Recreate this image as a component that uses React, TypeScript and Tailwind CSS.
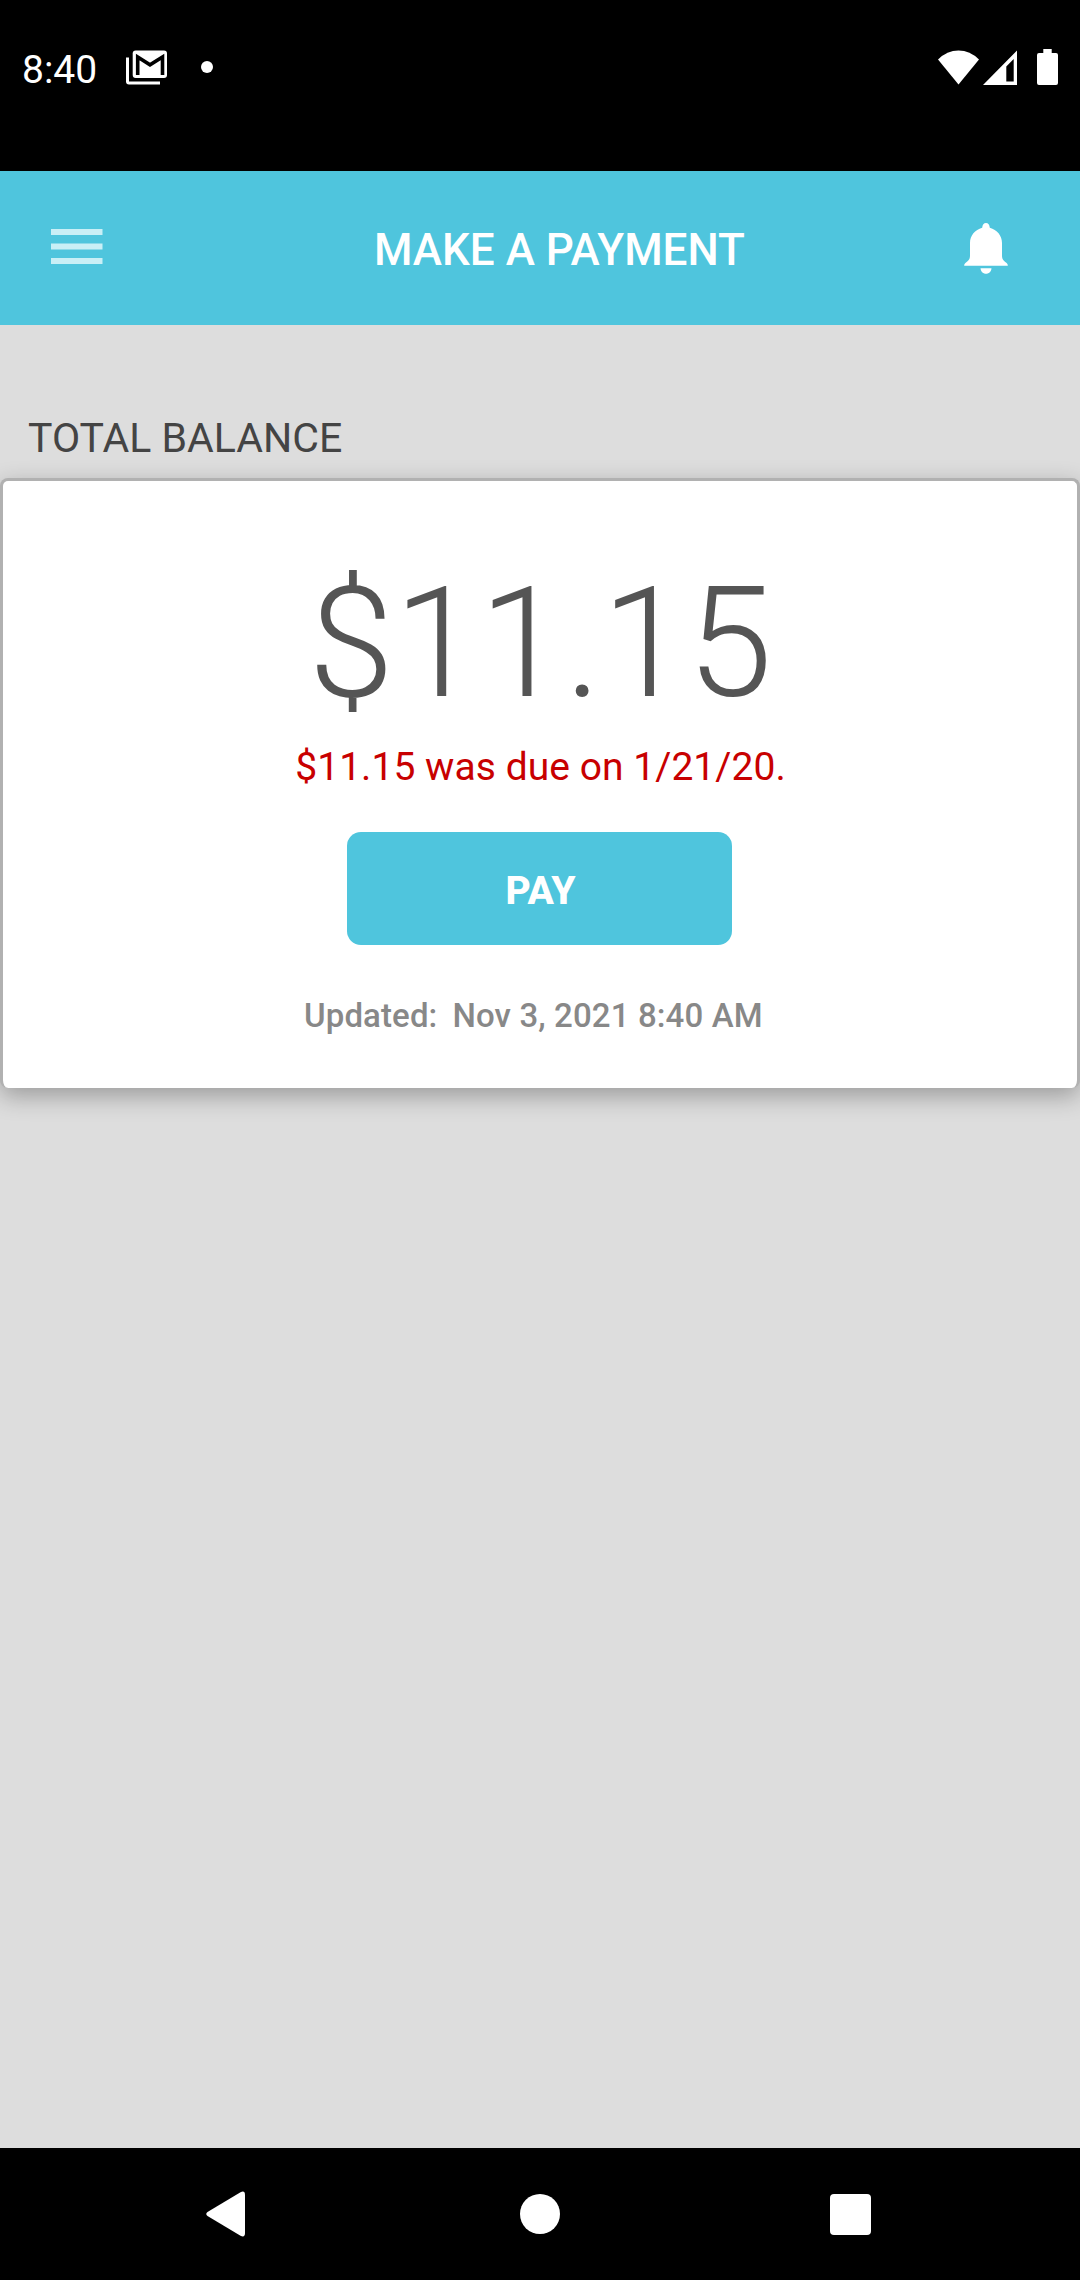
import React from 'react';

const account = {
  balance: '$11.15',
  dueNotice: '$11.15 was due on 1/21/20.',
  updated: 'Nov 3, 2021 8:40 AM',
};

const StatusBar: React.FC = () => (
  <div className="flex h-[171px] shrink-0 items-start justify-between bg-black pl-[22px] pr-[22px] pt-[49px] text-white">
    <div className="flex h-9 items-center">
      <span className="w-[104px] text-[39px] leading-9 pt-[5px]">8:40</span>
      <svg width="41" height="35" viewBox="0 0 41 35" fill="none">
        <path d="M0 7.500h3v24h31v3H3q-3 0-3-3z" fill="white" />
        <rect x="6.700" y="0.500" width="34.300" height="27.500" rx="3" fill="white" />
        <path d="M11.700 25V7L24 14.800 36.500 7V25" stroke="black" strokeWidth="3.600" />
      </svg>
      <span className="ml-[34px] size-3 rounded-full bg-white" />
    </div>
    <div className="flex h-9 items-start">
      <svg width="41" height="36" viewBox="0 0 41 36" fill="white">
        <path d="M20.500 35.500L0 10.500Q9 1.500 20.500 1.500T41 10.500z" />
      </svg>
      <svg className="ml-1" width="34" height="36" viewBox="0 0 34 36" fill="white">
        <path fillRule="evenodd" d="M34 1.500V36H0zM30.700 10L23.300 17.500V32.500H30.700z" />
      </svg>
      <svg className="ml-5" width="21" height="36" viewBox="0 0 21 36" fill="white">
        <path d="M6.300 0h8.400v4H19q2 0 2 2v28q0 2-2 2H2q-2 0-2-2V6q0-2 2-2h4.300z" />
      </svg>
    </div>
  </div>
);

const Header: React.FC = () => (
  <header className="flex h-[154px] shrink-0 items-center bg-[#4fc5dd] text-white">
    <svg className="ml-[51px] mb-[3px]" width="52" height="36" viewBox="0 0 52 36" fill="#c9eff6">
      <rect y="0" width="51.500" height="6" />
      <rect y="14.500" width="51.500" height="6" />
      <rect y="29" width="51.500" height="6" />
    </svg>
    <h1 className="ml-[271px] w-[590px] pt-[3px] text-[44px] font-medium leading-[52px] whitespace-nowrap">MAKE A PAYMENT</h1>
    <svg width="44" height="51" viewBox="0 0 44 51" fill="white">
      <path d="M22 0c2.200 0 3.600 1.600 3.800 4.700C33 6.800 38 12.500 38 20v12.500c0 4 1.500 5 4.300 7.300 1.200 1 1.500 1.700 1.500 3H.2c0-1.300.3-2 1.500-3C4.500 37.500 6 36.500 6 32.500V20C6 12.500 11 6.800 18.200 4.700 18.400 1.600 19.800 0 22 0z" />
      <path d="M16.500 45.300h11c-.3 3.300-2.500 5.500-5.500 5.500s-5.200-2.200-5.500-5.500z" />
    </svg>
  </header>
);

const BalanceCard: React.FC = () => (
  <section className="flex h-[610px] flex-col items-center rounded-[8px] border-[3px] border-b-0 border-[#b1b1b1] bg-white shadow-[0_8px_24px_rgba(0,0,0,0.3)]">
    <div className="mt-[83px] pl-px text-[154px] font-light leading-[160px] text-[#555]">{account.balance}</div>
    <div className="mt-5 pl-px text-[39px] leading-[46px] tracking-[0.05px] text-[#c80000]">{account.dueNotice}</div>
    <button className="mt-[42px] mr-px h-[113px] w-[385px] rounded-[14px] bg-[#4fc5dd] pt-[5px] pl-[2px] text-[39px] font-extrabold text-white">
      PAY
    </button>
    <div className="mt-[51px] flex w-[472px] gap-[15px] text-[33px] font-medium leading-10 tracking-[0.12px] whitespace-nowrap text-[#888]">
      <span>Updated:</span>
      <span>{account.updated}</span>
    </div>
  </section>
);

const NavBar: React.FC = () => (
  <nav className="flex h-[132px] shrink-0 items-center bg-black pl-[206px] text-white">
    <svg width="39" height="46" viewBox="0 0 39 46" fill="white">
      <path d="M1.500 21L34.500 1.200Q39-1 39 4V42Q39 47 34.500 44.800L1.500 25Q-1 23 1.500 21z" />
    </svg>
    <span className="ml-[275px] size-10 rounded-full bg-white" />
    <span className="ml-[270px] size-[41px] rounded-[4px] bg-white" />
  </nav>
);

export default function App() {
  return (
    <div className="flex h-[2280px] w-[1080px] flex-col overflow-hidden bg-[#ddd] font-['Roboto',sans-serif]">
      <StatusBar />
      <Header />
      <main className="flex-1 pt-[88px]">
        <h2 className="mb-[15px] ml-7 text-[41px] leading-[50px] text-[#444]">TOTAL BALANCE</h2>
        <BalanceCard />
      </main>
      <NavBar />
    </div>
  );
}
